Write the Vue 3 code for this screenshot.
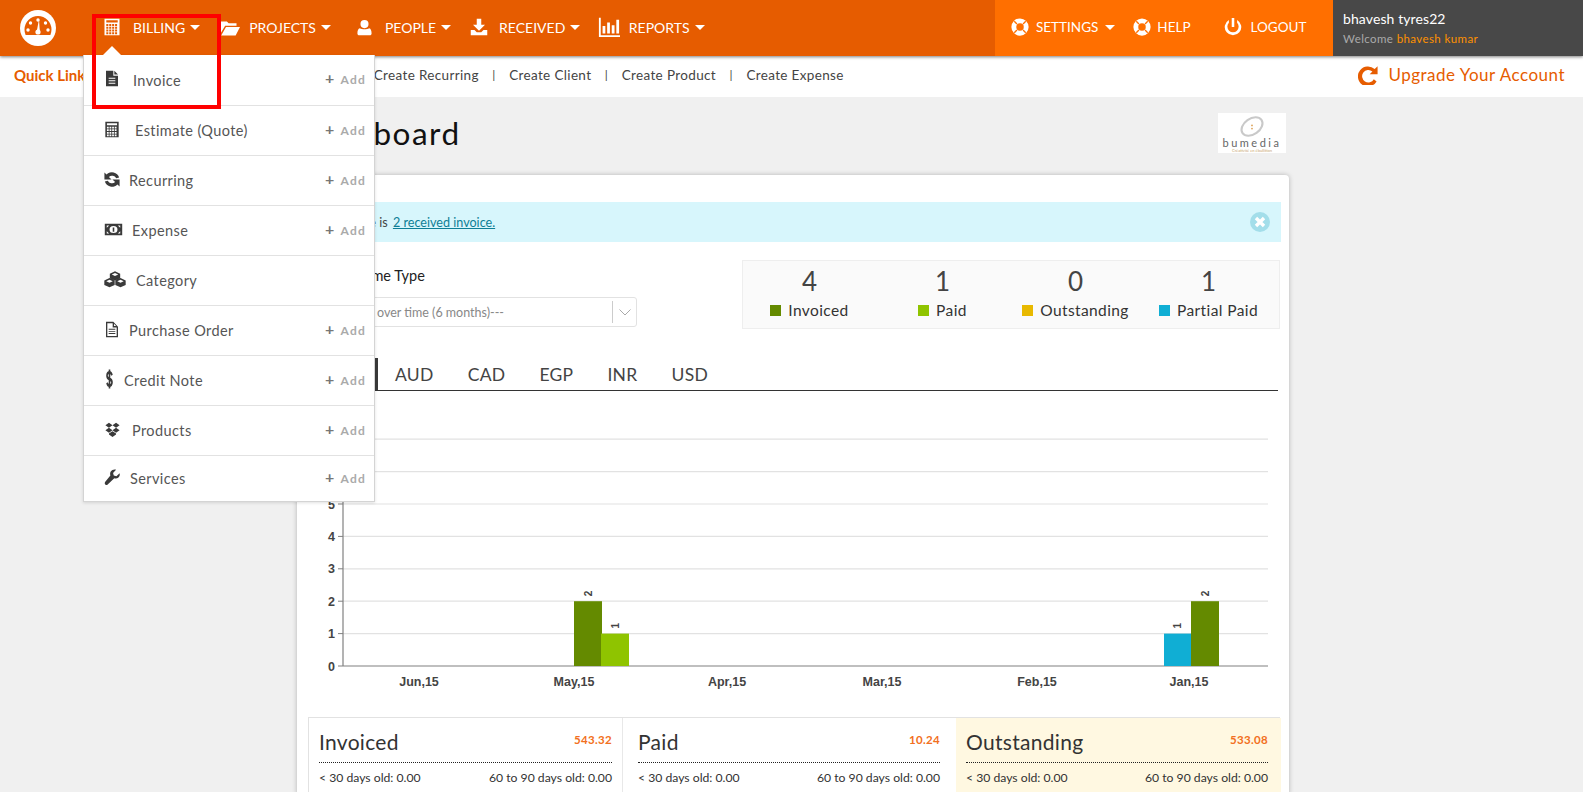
<script setup>
const rect = (x, y, w, h) => `M${x} ${y}h${w}v${h}h${-w}z`
const cells = () => {
  let s = ''
  for (let r = 0; r < 4; r++) for (let c = 0; c < 4; c++) s += rect(4.4 + c * 3.9, 8 + r * 3.7, 2.7, 2.5)
  return s
}
const cube = (cx, cy, r) => {
  const h = r * 0.87
  return `M${cx} ${cy - r}L${cx + h} ${cy - r / 2}V${cy + r / 2}L${cx} ${cy + r}L${cx - h} ${cy + r / 2}V${cy - r / 2}z` +
    `M${cx} ${cy - r * 0.66}L${cx + h * 0.62} ${cy - r * 0.32}L${cx} ${cy}L${cx - h * 0.62} ${cy - r * 0.32}z`
}
const icons = {
  calc: { d: rect(2, 1, 20, 22) + rect(4.4, 3, 15.2, 3) + cells() },
  folder: { d: 'M1 5h8l2 2h9v3H7L1 20z M8 11.500h16L19 21H2.500z' },
  user: { d: 'M12 1.500a5.700 5.700 0 1 1 0 11.400a5.700 5.700 0 0 1 0-11.400z M5.500 13c2.500 2 10.500 2 13 0 2.500.5 3.500 3.500 3.500 7.500 0 1.500-1 2.500-2.500 2.500h-15C3 23 2 22 2 20.500c0-4 1-7 3.500-7.500z' },
  download: { d: 'M9 1h6v8h5l-8 8-8-8h5z M1 16h5l3 3h6l3-3h5v7H1z' },
  bars: { d: 'M1 2h2v19h21v2H1z M5 11h3v8H5z M10 7h3v12h-3z M15 10h3v9h-3z M20 4h3v15h-3z' },
  buoy: {
    d: 'M12 .5a11.500 11.500 0 1 1 0 23a11.500 11.500 0 0 1 0-23z M12 7a5 5 0 1 0 0 10a5 5 0 0 0 0-10z',
    cut: 'M3.700 5l1.300-1.300 3.600 3.600-1.300 1.300z M20.300 5L19 3.700l-3.600 3.600 1.300 1.300z M3.700 19L5 20.300l3.600-3.600-1.300-1.300z M20.300 19L19 20.300l-3.600-3.600 1.300-1.300z'
  },
  power: { d: 'M10.300 0h3.400v12h-3.400z M6.500 2.500a11 11 0 1 0 11 0v3.900a7.500 7.500 0 1 1-11 0z' },
  doc: { d: 'M3 1h11v7h7v15H3z M15.500 1l5.500 5.500h-5.500z M7 11h10v1.500H7z M7 14.500h10V16H7z M7 18h10v1.500H7z' },
  refresh: { vb: '2.500 1.500 19 21', d: 'M20.500 9.500A9 9 0 0 0 5.500 5.800L3 3.500V12h8.500L8.300 8.800a5.500 5.500 0 0 1 8.700 1.700z M3.500 14.500a9 9 0 0 0 15 3.700L21 20.500V12h-8.500l3.200 3.200a5.500 5.500 0 0 1-8.700-1.700z' },
  money: { d: 'M1 4h22v16H1z M12 7a5 5 0 1 0 0 10a5 5 0 0 0 0-10z M11 9h2v6h-2z M3.500 6.500h3l-3 3z M20.500 6.500v3l-3-3z M3.500 17.500v-3l3 3z M20.500 17.500h-3l3-3z' },
  cubes: { d: cube(12, 7, 6.500) + cube(6, 16.500, 6.500) + cube(18, 16.500, 6.500) },
  file: { d: 'M3 1h11l7 7v15H3z M5 3v18h14V9h-6V3z M15 3.800V7h3.200z M7 11h10v1.300H7z M7 14h10v1.300H7z M7 17h10v1.300H7z' },
  dollar: { s: 'M17.500 7.500C16.500 5 14.500 4 12 4 9 4 6.500 5.500 6.500 8s2.500 3.300 5.500 4 5.500 1.500 5.500 4-2.500 4-5.500 4c-2.500 0-4.500-1-5.500-3.500 M12 0.500v23' },
  dropbox: { d: 'M7 2.500l5 3.500-5 3.500L2 6z M17 2.500L22 6l-5 3.500L12 6z M7 9.500l5 3.500-5 3.500L2 13z M17 9.500l5 3.500-5 3.500-5-3.500z M7 17.500l5-3 5 3v1.500l-5 3.500-5-3.500z' },
  wrench: { d: 'M22 6l-4.500 4.200-3.700-1-1-3.700L17 1c-3-.8-6 .3-7.500 2.700-1.100 2-1 3.700-.5 5.300L1.500 18.500a2.500 2.500 0 0 0 .3 3.300 2.500 2.500 0 0 0 3.400 0L14.500 13c2 .7 4 .5 5.500-.7 2-1.500 2.800-3.700 2-6.300z' },
  upgrade: { d: 'M23.500 1.500V11H14l3.300-3.300A7.500 7.500 0 1 0 19 17l3.300 2.700A12 12 0 1 1 20 4.800z' }
}

const navLeft = [
  { label: 'Billing', icon: 'calc', w: 18, gap: 12, after: 19 },
  { label: 'Projects', icon: 'folder', w: 21, gap: 9, after: 25 },
  { label: 'People', icon: 'user', w: 17, gap: 12, after: 19 },
  { label: 'Received', icon: 'download', w: 18, gap: 11, after: 17.5 },
  { label: 'Reports', icon: 'bars', w: 22, gap: 9, after: 0 }
]
const navRight = [
  { label: 'Settings', icon: 'buoy', w: 18, gap: 7, caret: true, after: 18 },
  { label: 'Help', icon: 'buoy', w: 18, gap: 6, after: 33 },
  { label: 'Logout', icon: 'power', w: 18, gap: 9, after: 0 }
]
const quick = ['Create Invoice', 'Create Estimate', 'Create Recurring', 'Create Client', 'Create Product', 'Create Expense']
const menu = [
  { label: 'Invoice', icon: 'doc', w: 16, gap: 13, add: true },
  { label: 'Estimate (Quote)', icon: 'calc', w: 16, gap: 15, add: true },
  { label: 'Recurring', icon: 'refresh', w: 16, gap: 9, add: true },
  { label: 'Expense', icon: 'money', w: 19, gap: 9, add: true },
  { label: 'Category', icon: 'cubes', w: 22, gap: 10, add: false },
  { label: 'Purchase Order', icon: 'file', w: 16, gap: 9, add: true },
  { label: 'Credit Note', icon: 'dollar', w: 11, gap: 9, h: 20, add: true },
  { label: 'Products', icon: 'dropbox', w: 17, gap: 11, add: true },
  { label: 'Services', icon: 'wrench', w: 17, gap: 9, add: true, last: true }
]
const stats = [
  { n: 4, label: 'Invoiced', color: '#648a00' },
  { n: 1, label: 'Paid', color: '#8fc400' },
  { n: 0, label: 'Outstanding', color: '#e8b900' },
  { n: 1, label: 'Partial Paid', color: '#10aed4' }
]
const tabs = ['AUD', 'CAD', 'EGP', 'INR', 'USD']
const base = 666
const step = 32.4
const yTicks = [0, 1, 2, 3, 4, 5, 6, 7].map(v => ({ v, y: base - v * step }))
const months = [
  { t: 'Jun,15', x: 419 }, { t: 'May,15', x: 574 }, { t: 'Apr,15', x: 727 },
  { t: 'Mar,15', x: 882 }, { t: 'Feb,15', x: 1037 }, { t: 'Jan,15', x: 1189 }
]
const bars = [
  { x: 574, w: 28, v: 2, c: '#648a00' },
  { x: 601, w: 28, v: 1, c: '#8fc400' },
  { x: 1164, w: 27, v: 1, c: '#10aed4' },
  { x: 1191, w: 28, v: 2, c: '#648a00' }
]
const panels = [
  { t: 'Invoiced', a: '543.32' },
  { t: 'Paid', a: '10.24' },
  { t: 'Outstanding', a: '533.08', hi: true }
]
</script>

<template>
  <div class="page">
    <header class="top">
      <div class="logo-wrap">
        <svg class="logo" viewBox="0 0 36 36">
          <circle cx="18" cy="18" r="18" fill="#fff" />
          <path d="M18 6a13.500 13.500 0 0 1 13.500 13.500c0 2-.4 3.800-1.100 5.500H5.600a13.500 13.500 0 0 1-1.100-5.500A13.500 13.500 0 0 1 18 6z" fill="#e65c00" />
          <circle cx="18" cy="10" r="1.700" fill="#fff" />
          <circle cx="10.500" cy="13" r="1.700" fill="#fff" />
          <circle cx="25.500" cy="13" r="1.700" fill="#fff" />
          <circle cx="8" cy="20" r="1.700" fill="#fff" />
          <circle cx="28" cy="20" r="1.700" fill="#fff" />
          <path d="M19 9.500l.8 11.500h-3z" fill="#fff" />
          <circle cx="18" cy="22" r="2.600" fill="#fff" />
        </svg>
      </div>
      <nav class="nav">
        <a v-for="n in navLeft" :key="n.label" class="nav-item" :style="{ marginRight: n.after + 'px' }">
          <svg class="ico" :style="{ width: n.w + 'px', height: n.w + 'px', marginRight: n.gap + 'px' }" viewBox="0 0 24 24" preserveAspectRatio="none">
            <path :d="icons[n.icon].d" fill="#fff" fill-rule="evenodd" />
          </svg>
          <span>{{ n.label }}</span>
          <i class="caret"></i>
        </a>
      </nav>
      <div class="nav-right">
        <a v-for="n in navRight" :key="n.label" class="nav-item" :style="{ marginRight: n.after + 'px' }">
          <svg class="ico" :style="{ width: n.w + 'px', height: n.w + 'px', marginRight: n.gap + 'px' }" viewBox="0 0 24 24">
            <path :d="icons[n.icon].d" fill="#fff" fill-rule="evenodd" />
            <path v-if="icons[n.icon].cut" :d="icons[n.icon].cut" fill="#ff6f00" />
          </svg>
          <span>{{ n.label }}</span>
          <i v-if="n.caret" class="caret"></i>
        </a>
      </div>
      <div class="user">
        <div class="user-name">bhavesh tyres22</div>
        <div class="user-welcome">Welcome <b>bhavesh kumar</b></div>
      </div>
    </header>

    <div class="sub">
      <strong class="ql">Quick Links</strong>
      <div class="ql-list">
        <template v-for="(q, i) in quick" :key="q">
          <span class="sep" v-if="i > 0">|</span>
          <a class="ql-item">{{ q }}</a>
        </template>
      </div>
      <a class="upgrade">
        <svg viewBox="0 0 24 24"><path :d="icons.upgrade.d" fill="#e65c00" /></svg>
        <span>Upgrade Your Account</span>
      </a>
    </div>

    <main class="main">
      <div class="title-row">
        <h1>Dashboard</h1>
        <div class="brand">
          <svg viewBox="0 0 30 20">
            <ellipse cx="15" cy="10" rx="11" ry="7.500" transform="rotate(-35 15 10)" fill="none" stroke="#c9c9c9" stroke-width="2" />
            <circle cx="15" cy="9" r="0.800" fill="#d99a4a" />
            <circle cx="15" cy="12" r="0.800" fill="#d99a4a" />
          </svg>
          <div class="brand-name">bumedia</div>
          <div class="brand-sub">Créativité en ébullition</div>
        </div>
      </div>

      <section class="card">
        <div class="alert">
          <span>There is <a>2 received invoice.</a></span>
          <svg class="close" viewBox="0 0 20 20">
            <circle cx="10" cy="10" r="10" fill="#a3deea" />
            <path d="M6 6l8 8M14 6l-8 8" stroke="#fff" stroke-width="3.400" />
          </svg>
        </div>

        <div class="filter-row">
          <div class="filter">
            <label>Select Income Type</label>
            <div class="select">
              <span>---Sales over time (6 months)---</span>
              <i class="select-btn">
                <svg viewBox="0 0 12 7"><path d="M.5.5L6 6 11.500.5" fill="none" stroke="#aaa" /></svg>
              </i>
            </div>
          </div>
          <div class="stats">
            <div v-for="s in stats" :key="s.label" class="stat">
              <div class="stat-n">{{ s.n }}</div>
              <div class="stat-l"><i :style="{ background: s.color }"></i>{{ s.label }}</div>
            </div>
          </div>
        </div>

        <div class="tabs">
          <a class="tab active">All</a>
          <a v-for="t in tabs" :key="t" class="tab">{{ t }}</a>
        </div>

        <svg class="chart" viewBox="308 391 972 326">
          <line v-for="t in yTicks" :key="'g' + t.v" x1="343" x2="1268" :y1="t.y" :y2="t.y" :stroke="t.v === 0 ? '#808080' : '#e2e2e2'" stroke-width="1.200" />
          <line x1="343" x2="343" y1="405" :y2="base" stroke="#808080" stroke-width="1.200" />
          <g v-for="t in yTicks" :key="'t' + t.v">
            <line x1="338" x2="343" :y1="t.y" :y2="t.y" stroke="#808080" />
            <text x="335" :y="t.y + 4.500" text-anchor="end" class="axis">{{ t.v }}</text>
          </g>
          <text v-for="m in months" :key="m.t" :x="m.x" y="686" text-anchor="middle" class="axis">{{ m.t }}</text>
          <g v-for="b in bars" :key="b.x">
            <rect :x="b.x" :y="base - b.v * step" :width="b.w" :height="b.v * step" :fill="b.c" />
            <text class="bar-l" :transform="`translate(${b.x + b.w / 2 + 3.500} ${base - b.v * step - 5}) rotate(-90)`">{{ b.v }}</text>
          </g>
        </svg>

        <div class="panels">
          <div v-for="p in panels" :key="p.t" class="panel" :class="{ hi: p.hi }">
            <div class="panel-head">
              <span class="panel-t">{{ p.t }}</span>
              <b class="panel-a">{{ p.a }}</b>
            </div>
            <div class="panel-row">
              <span>&lt; 30 days old: 0.00</span>
              <span>60 to 90 days old: 0.00</span>
            </div>
          </div>
        </div>
      </section>
    </main>

    <div class="hl"></div>

    <div class="menu-caret"></div>
    <ul class="menu">
      <li v-for="m in menu" :key="m.label" :class="{ last: m.last }">
        <svg class="m-ico" :style="{ width: m.w + 'px', height: (m.h || 17) + 'px', marginRight: m.gap + 'px' }" :viewBox="icons[m.icon].vb || '0 0 24 24'" preserveAspectRatio="none">
          <path v-if="icons[m.icon].d" :d="icons[m.icon].d" fill="#3a3a3a" fill-rule="evenodd" />
          <path v-else :d="icons[m.icon].s" fill="none" stroke="#3a3a3a" stroke-width="3.500" />
        </svg>
        <span class="m-label">{{ m.label }}</span>
        <span v-if="m.add" class="m-add"><em>+</em>Add</span>
      </li>
    </ul>
  </div>
</template>

<style>
html, body { margin: 0; padding: 0; overflow: hidden; background: #f0f0f0; }
</style>

<style scoped>
.page {
  position: relative;
  width: 1583px;
  height: 792px;
  overflow: hidden;
  background: #f0f0f0;
  font-family: Lato, "Open Sans", sans-serif;
  color: #333;
}
a { color: inherit; text-decoration: none; }

.top {
  position: relative;
  z-index: 3;
  display: flex;
  height: 56px;
  background: #e65c00;
  box-shadow: 0 1px 3px rgba(0, 0, 0, .5);
  color: #fff;
}
.logo-wrap { width: 103px; flex: none; display: flex; align-items: center; padding-left: 20px; box-sizing: border-box; }
.logo { width: 36px; height: 36px; }
.nav, .nav-right { display: flex; align-items: center; }
.nav { flex: 1; padding-bottom: 2px; }
.nav-right {
  width: 338px;
  box-sizing: border-box;
  padding-left: 16px;
  background: #ff6f00;
  padding-bottom: 2px;
}
.nav-item {
  display: flex;
  align-items: center;
  font-size: 14px;
  text-transform: uppercase;
  letter-spacing: 0;
}
.nav-right .nav-item { font-size: 13.500px; }
.ico { display: block; flex: none; }
.caret {
  width: 0;
  height: 0;
  margin-left: 5px;
  border-left: 5px solid transparent;
  border-right: 5px solid transparent;
  border-top: 5px solid #fff;
}
.nav-right .caret { margin-left: 7px; }
.user {
  width: 250px;
  box-sizing: border-box;
  padding: 10px 0 0 10px;
  background: #484848;
}
.user-name { font-size: 14px; line-height: 17px; letter-spacing: .1px; }
.user-welcome { margin-top: 4px; font-size: 11.500px; line-height: 15px; letter-spacing: .4px; color: #aaa; }
.user-welcome b { font-weight: 400; color: #ff9100; }

.sub {
  display: flex;
  align-items: center;
  height: 41px;
  box-sizing: border-box;
  padding: 0 18px 4px 14px;
  background: #fff;
}
.ql { font-size: 15px; color: #e65c00; font-weight: 700; white-space: nowrap; }
.ql-list { display: flex; align-items: center; margin-left: 32px; font-size: 13.500px; letter-spacing: .35px; color: #444; }
.sep { margin: 0 13.500px; font-size: 12px; }
.upgrade { display: flex; align-items: center; margin-left: auto; font-size: 17px; letter-spacing: .5px; color: #e65c00; }
.upgrade svg { width: 20px; height: 20px; margin-right: 10px; }

.main { padding-left: 297px; width: 992px; }
.title-row {
  display: flex;
  justify-content: space-between;
  height: 78px;
  box-sizing: border-box;
  padding: 16px 3px 0 0;
}
h1 { margin: -1px 0 0; font-size: 31.500px; line-height: 42px; font-weight: 400; color: #111; letter-spacing: 1.500px; }
.brand {
  width: 68px;
  height: 40px;
  background: #fff;
  text-align: center;
  overflow: hidden;
}
.brand svg { display: block; width: 32px; height: 21px; margin: 3px auto 0; }
.brand-name { font-size: 11px; line-height: 11px; letter-spacing: 2.500px; color: #666; white-space: nowrap; }
.brand-sub { font-size: 4px; line-height: 5px; color: #c9a56d; white-space: nowrap; }

.card {
  background: #fff;
  border-radius: 4px 4px 0 0;
  box-shadow: 0 0 5px rgba(0, 0, 0, .25);
  padding: 27px 8px 0 11px;
  height: 620px;
  box-sizing: border-box;
}
.alert {
  display: flex;
  align-items: center;
  justify-content: space-between;
  height: 40px;
  padding: 0 11px 0 36px;
  background: #d7f6fc;
  font-size: 12.600px;
  color: #444;
}
.alert a { color: #0e7f96; text-decoration: underline; margin-left: 2px; }
.close { width: 20px; height: 20px; }
.filter-row { display: flex; justify-content: space-between; margin-top: 18px; }
.filter { width: 329px; }
.filter label { display: block; font-size: 14.500px; line-height: 18px; margin: 7px 0 0 -6px; color: #222; }
.select {
  display: flex;
  align-items: center;
  justify-content: space-between;
  height: 30px;
  margin-top: 12px;
  box-sizing: border-box;
  border: 1px solid #e2e2e2;
  border-radius: 3px;
  padding-left: 23px;
  font-size: 12.500px;
  color: #888;
}
.select-btn {
  display: flex;
  align-items: center;
  justify-content: center;
  width: 23px;
  height: 22px;
  border-left: 1px solid #ccc;
}
.select-btn svg { width: 12px; height: 7px; }
.stats {
  display: grid;
  grid-template-columns: repeat(4, 133px);
  width: 538px;
  height: 69px;
  box-sizing: border-box;
  margin-right: 1px;
  padding-right: 1px;
  border: 1px solid #eee;
  background: #fafafa;
}
.stat { text-align: center; }
.stat-n { font-size: 26px; line-height: 30px; margin-top: 5px; color: #444; font-weight: 400; }
.stat-l {
  display: flex;
  align-items: center;
  justify-content: center;
  margin-top: 4px;
  font-size: 15.500px;
  line-height: 20px;
  letter-spacing: .4px;
  color: #333;
  white-space: nowrap;
}
.stat-l i { width: 11px; height: 11px; margin-right: 7px; }

.tabs {
  display: flex;
  align-items: stretch;
  height: 33px;
  margin-top: 29px;
  border-bottom: 1.500px solid #333;
  box-sizing: border-box;
  margin-right: 3px;
}
.tab { padding: 7px 17px 0; font-size: 17.500px; line-height: 20px; letter-spacing: .3px; color: #444; }
.tab.active {
  width: 70px;
  box-sizing: border-box;
  text-align: center;
  border-right: 3px solid #3a3a3a;
  margin-right: 0;
}
.chart { display: block; width: 972px; height: 326px; }
.axis { font: 700 12.500px "Liberation Sans", Arial, sans-serif; fill: #444; }
.bar-l { font: 700 10px "Liberation Sans", Arial, sans-serif; fill: #444; }

.panels {
  display: grid;
  grid-template-columns: 314px 333px 325px;
  border: 1px solid #e2e2e2;
  border-bottom: 0;
  width: 972px;
  box-sizing: border-box;
  height: 90px;
}
.panel { padding: 0 10px; border-right: 1px solid #e8e8e8; min-width: 0; }
.panel:nth-child(2) { padding-left: 15px; padding-right: 16px; border-right: 0; }
.panel.hi { background: #fff8e1; border-right: 0; padding-right: 13px; }
.panel-head {
  display: flex;
  justify-content: space-between;
  align-items: center;
  height: 45px;
  border-bottom: 1px dotted #222;
  padding-top: 2px;
  box-sizing: border-box;
}
.panel-t { font-size: 21px; color: #333; letter-spacing: .3px; }
.panel-a { font-size: 11.500px; color: #f26f21; letter-spacing: .3px; margin-top: -3px; }
.panel-row {
  display: flex;
  justify-content: space-between;
  margin-top: 7px;
  font-size: 12.200px;
  line-height: 15px;
  color: #333;
}

.hl {
  position: absolute;
  z-index: 6;
  left: 92px;
  top: 14px;
  width: 129px;
  height: 95px;
  box-sizing: border-box;
  border: 4px solid #f00;
  pointer-events: none;
}
.menu-caret {
  position: absolute;
  z-index: 5;
  left: 103px;
  top: 46px;
  width: 0;
  height: 0;
  border-left: 9px solid transparent;
  border-right: 9px solid transparent;
  border-bottom: 9px solid #fff;
}
.menu {
  position: absolute;
  z-index: 4;
  left: 83px;
  top: 55px;
  width: 292px;
  margin: 0;
  padding: 0;
  list-style: none;
  box-sizing: border-box;
  background: #fff;
  border: 1px solid #d4d4d4;
  border-top: 0;
  box-shadow: 0 1px 3px rgba(0, 0, 0, .12);
}
.menu li {
  display: flex;
  align-items: center;
  height: 50px;
  box-sizing: border-box;
  padding: 0 8px 0 20px;
  border-bottom: 1px solid #e2e2e2;
}
.menu li:first-child { height: 51px; }
.menu li.last { height: 45px; border-bottom: 0; }
.m-ico { flex: none; margin-top: -3px; }
.m-label { font-size: 14.500px; letter-spacing: .4px; color: #555; }
.m-add { margin-left: auto; margin-top: -5px; font-size: 12px; font-weight: 700; letter-spacing: 1.200px; color: #aaa; }
.m-add em { font-style: normal; font-size: 16px; color: #777; margin-right: 5px; }
</style>
